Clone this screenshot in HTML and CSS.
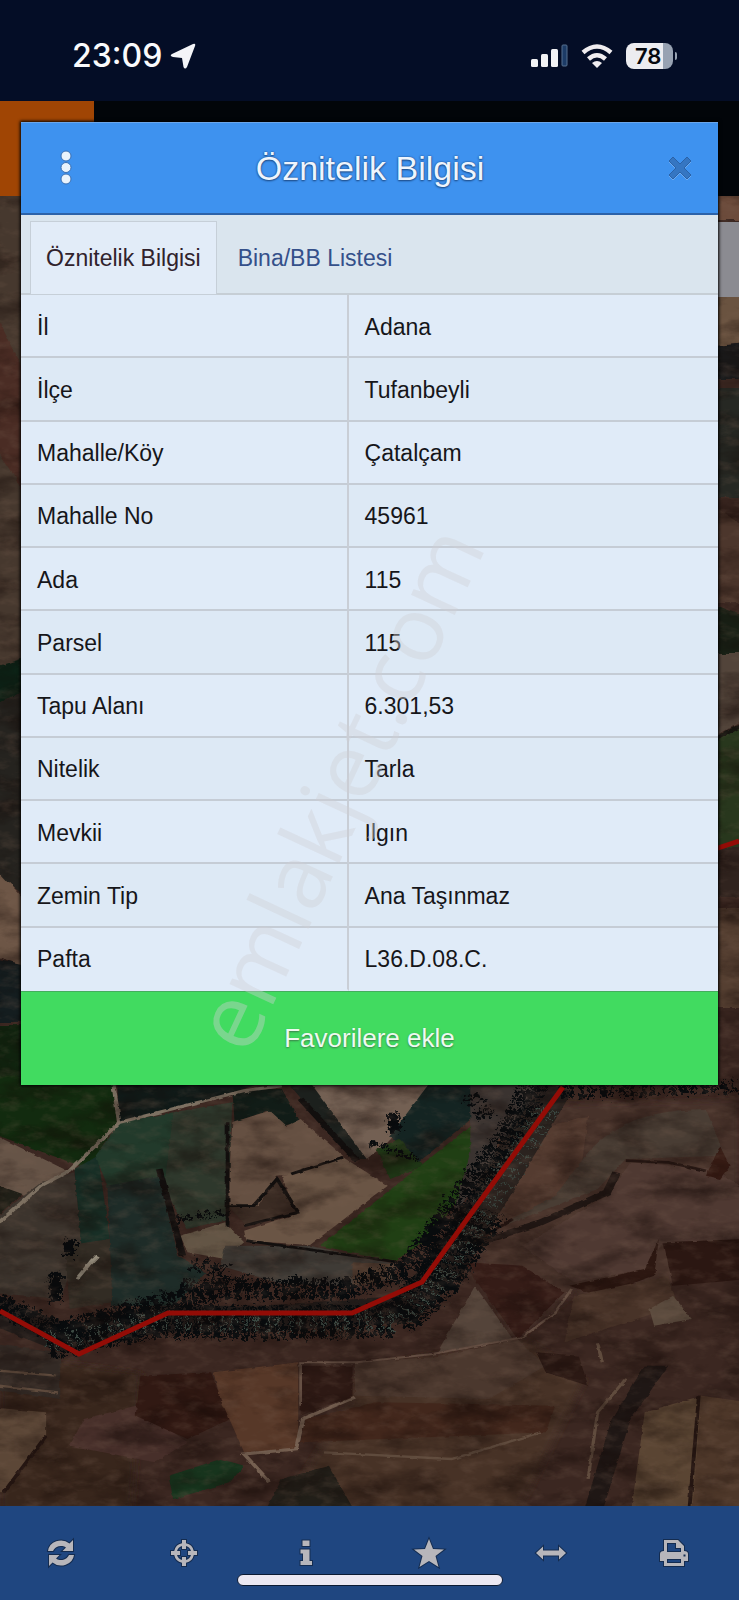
FILE: index.html
```html
<!DOCTYPE html>
<html lang="tr">
<head>
    <meta charset="UTF-8">
    <meta name="viewport" content="width=device-width, initial-scale=1.0">
    <title>Öznitelik Bilgisi</title>
    <link rel="stylesheet" href="styles.css">
</head>
<body>
    <div class="screen">
        <div class="status-bar">
            <div class="status-left">
                <span class="time">23:09</span>
                <svg width="26" height="26" viewBox="0 0 26 26"><path d="M23 1Q26 0 25 3L17 24Q15 27 13.500 24L12 15L3 14Q-1 13 2 11Z" fill="#f4f4f8"/></svg>
            </div>
            <div class="status-right">
                <svg width="37" height="24" viewBox="0 0 37 24">
                    <rect x="0" y="15" width="7" height="8" rx="1.500" fill="#f2f2f4"/>
                    <rect x="10" y="10" width="7" height="13" rx="1.500" fill="#f2f2f4"/>
                    <rect x="20" y="5" width="7" height="18" rx="1.500" fill="#f2f2f4"/>
                    <rect x="31" y="1" width="5" height="21" rx="1" fill="#1c3b66" stroke="#56718f"/>
                </svg>
                <svg width="32" height="24" viewBox="0 0 32 24" fill="none" stroke="#f0edf0" stroke-width="4.500">
                    <path d="M2 8.500Q16-3.500 30 8.500M7.500 15Q16 7.500 24.500 15"/>
                    <path d="M16 24L11 19Q16 15 21 19Z" fill="#f0edf0" stroke="none"/>
                </svg>
                <div class="battery"><span class="battery-level">78</span></div>
            </div>
        </div>

        <div class="top-bar"><div class="menu-tile"></div></div>

        <div class="map">
            <svg class="map-image" viewBox="0 196 739 1310" preserveAspectRatio="xMidYMin slice">
                <defs>
                    <filter id="rough" x="-5%" y="-5%" width="110%" height="110%">
                        <feTurbulence type="fractalNoise" baseFrequency="0.060" numOctaves="3" seed="4" result="n"/>
                        <feDisplacementMap in="SourceGraphic" in2="n" scale="10" xChannelSelector="R" yChannelSelector="G" color-interpolation-filters="sRGB"/>
                    </filter>
                    <filter id="trees" x="-5%" y="-20%" width="110%" height="140%">
                        <feTurbulence type="fractalNoise" baseFrequency="0.110 0.080" numOctaves="4" seed="9" result="n"/>
                        <feDisplacementMap in="SourceGraphic" in2="n" scale="52" xChannelSelector="R" yChannelSelector="G" color-interpolation-filters="sRGB"/>
                    </filter>
                    <filter id="soft"><feGaussianBlur stdDeviation="8"/></filter>
                    <filter id="grainDark" x="0" y="0" width="100%" height="100%" color-interpolation-filters="sRGB">
                        <feTurbulence type="fractalNoise" baseFrequency="0.018 0.040" numOctaves="5" seed="12"/>
                        <feColorMatrix values="0 0 0 0 0.070  0 0 0 0 0.030  0 0 0 0 0.020  2.200 0 0 0 -0.950"/>
                    </filter>
                    <filter id="grainLight" x="0" y="0" width="100%" height="100%" color-interpolation-filters="sRGB">
                        <feTurbulence type="fractalNoise" baseFrequency="0.050 0.100" numOctaves="4" seed="31"/>
                        <feColorMatrix values="0 0 0 0 0.480  0 0 0 0 0.380  0 0 0 0 0.320  0 2 0 0 -0.950"/>
                    </filter>
                </defs>
                <rect y="196" width="739" height="1310" fill="#3b2721"/>

                <!-- left edge -->
                <g filter="url(#rough)">
                    <path d="M-10 190H30V670H-10Z" fill="#46382e"/>
                    <path d="M-10 300L30 380V500L-10 440Z" fill="#4a2c24"/>
                    <path d="M-10 672L30 660V694L-10 708Z" fill="#0c2216"/>
                    <path d="M-10 708L30 694V900L-10 870Z" fill="#25231f"/>
                    <path d="M-10 862L30 905V970L-10 956Z" fill="#6d5646"/>
                    <path d="M-10 960L30 968V1025H-10Z" fill="#141d1f"/>
                    <path d="M-10 1028H30V1100H-10Z" fill="#10240f"/>
                </g>

                <!-- right edge -->
                <g filter="url(#rough)">
                    <path d="M700 190H750V222H700Z" fill="#6b4a3a"/>
                    <path d="M700 290H750V345L700 350Z" fill="#6a5340"/>
                    <path d="M700 350L750 345V382H700Z" fill="#1b1c1d"/>
                    <path d="M700 390H750V500H700Z" fill="#262823"/>
                    <path d="M700 500L750 530V605H700Z" fill="#4c362c"/>
                    <path d="M700 600L750 620V655H700Z" fill="#182015"/>
                    <path d="M700 655H750V720L700 750Z" fill="#52443a"/>
                    <path d="M700 755L750 725V850H700Z" fill="#28371d"/>
                    <path d="M700 850H750V900H700Z" fill="#30231e"/>
                    <path d="M700 910H750V1010H700Z" fill="#553f31"/>
                    <path d="M700 752L750 724" stroke="#15140f" stroke-width="4"/>
                </g>

                <!-- fields and hills below the dialog -->
                <g transform="translate(0 1080) scale(0.4713 0.3333)">
                    <g filter="url(#soft)">
                        <path d="M1000 80L1568 60V500L1400 620L1220 640L1090 780L1000 500Z" fill="#463029"/>
                        <path d="M0 820L300 880L280 1290H0Z" fill="#38251e"/>
                        <path d="M760 860L1120 780L1240 900L1100 1290H600L740 960Z" fill="#463327"/>
                    </g>
                    <g filter="url(#rough)">
                        <path d="M-20-10H245L250 130L190 270L-20 160Z" fill="#122b0f"/>
                        <path d="M250-10H600L500 40L255 130Z" fill="#101a18"/>
                        <path d="M-20 160L145 275L70 360L-20 310Z" fill="#665447"/>
                        <path d="M-20 310L50 345L-20 430Z" fill="#201f17"/>
                        <path d="M-20 430L90 310L160 280L175 490L130 660L-20 640Z" fill="#3c342d"/>
                        <path d="M160 270L210 230L235 480L175 500Z" fill="#182f26"/>
                        <path d="M205 230L255 130L370 100L385 260L340 320L230 320Z" fill="#223a2b"/>
                        <path d="M370 100L495 70L485 420L400 450L350 330Z" fill="#2e382c"/>
                        <path d="M230 320L340 290L380 530L440 580L370 680L240 680Z" fill="#1e2c28"/>
                        <path d="M140 500L235 480L240 670L150 690Z" fill="#322c24"/>
                        <path d="M495 30L600 30L640 130L600 140L570 95L500 130Z" fill="#111c17"/>
                        <path d="M495 130L575 95L610 140L640 120L730 230L620 285L590 290L550 380L485 380Z" fill="#655042"/>
                        <path d="M600 290L730 235L825 320L660 498L525 485L520 455L630 405Z" fill="#6a5545"/>
                        <path d="M485 380L550 380L595 295L635 400L525 440Z" fill="#3b2c24"/>
                        <path d="M630-10H930L915 50L825 190L780 240Z" fill="#736053"/>
                        <path d="M600-10H650L780 240L750 240Z" fill="#1c201d"/>
                        <path d="M925-10H1010V110L890 250L830 170Z" fill="#142422"/>
                        <path d="M800 210L850 180L900 260L830 300Z" fill="#1e3515"/>
                        <path d="M1010 130L1080 150L1000 320L900 490L840 545L680 500L850 310L930 220Z" fill="#203f14"/>
                        <path d="M385 470L480 430L520 490L480 540L400 520Z" fill="#635545"/>
                        <path d="M480 500L660 500L840 555V600L740 620L600 615L470 560Z" fill="#3f3b36"/>
                        <path d="M750 550L840 555L830 600L750 620Z" fill="#503c30"/>
                        <path d="M1000-10H1160L1050 240L960 420L1000 220Z" fill="#3a3330"/>
                        <path d="M1060 180L1250 110L1230 330L1010 480Z" fill="#543b30"/>
                        <path d="M1250 220Q1330 90 1500 90L1540 230L1330 240L1270 330L1090 430L1020 470L1180 350Z" fill="#493d34"/>
                        <path d="M1340 250L1520 270L1590 340V480L1410 490L1370 570L1220 610L1110 500L1290 350Z" fill="#4f3932"/>
                        <path d="M1410 490L1590 480V600L1430 620Z" fill="#2b1712"/>
                        <path d="M1210 620L1370 570L1400 480L1390 590L1270 650Z" fill="#2c1711"/>
                        <path d="M1500 290L1530 200L1550 260L1530 300Z" fill="#351a13"/>
                        <path d="M985 550L1110 560L1200 640L1100 780Z" fill="#351c17"/>
                        <path d="M1010 620L1090 780L930 820Z" fill="#54443a"/>
                        <path d="M1220 650L1420 590L1440 680L1200 790Z" fill="#483328"/>
                        <path d="M1380 690L1430 650L1470 720L1390 740Z" fill="#5a4a3d"/>
                        <path d="M-20 790L130 820V960L-20 930Z" fill="#332a25"/>
                        <path d="M-20 985L100 1000L100 1070L10 1240H-20Z" fill="#5c4737"/>
                        <path d="M180 1020L290 980L400 1090L330 1150L150 1100Z" fill="#472f2a"/>
                        <path d="M300 890L450 880L490 1020L400 1080L290 1010Z" fill="#311913"/>
                        <path d="M455 880L635 850V1110L520 1120L470 960Z" fill="#573828"/>
                        <path d="M640 860L750 860V950L640 1010Z" fill="#2d1914"/>
                        <path d="M755 850L920 835L1100 780L1160 860L1040 960L755 950Z" fill="#4b382e"/>
                        <path d="M650 1020L800 970L1180 980L1160 1060L640 1090Z" fill="#42271c"/>
                        <path d="M1140 820L1230 830L1250 920L1160 880Z" fill="#2b1914"/>
                        <path d="M1370 860L1420 860L1340 1020L1280 1300H1240L1300 1020Z" fill="#1f1715"/>
                        <path d="M1370 1000L1490 950L1480 1310H1340Z" fill="#5a4533"/>
                        <path d="M1490 950L1590 970V1310H1470Z" fill="#4d3729"/>
                        <path d="M360 1190L470 1140L520 1160L490 1210L370 1260Z" fill="#17341d"/>
                        <path d="M600 1200L700 1160L760 1310H560Z" fill="#221f19"/>
                    </g>
                    <g filter="url(#rough)" fill="none" stroke="#7d7162" stroke-width="9">
                        <path d="M240-10L255 130L520 35L600 20M255 130L150 275L90 320L0 430"/>
                        <path d="M755 955L645 1020L630 1110L520 1125L575 1210" stroke="#756051"/>
                        <path d="M640 980V850L760 850L920 825L1110 775L1180 700L1215 630" stroke="#665044" stroke-width="6"/>
                        <path d="M0 875L120 890M0 920L125 940M690 1120L960 1140L1150 1060M1270 790L1280 850M1250 1200L1270 1000L1330 900" stroke="#5f4b3d" stroke-width="7"/>
                        <path d="M200 540L165 600M210 530L190 560" stroke="#9b9382"/>
                    </g>
                    <g filter="url(#rough)" fill="none" stroke="#120f0e" stroke-width="8">
                        <path d="M485 380H540L590 300L635 400L520 440M620 285L730 235M525 485L850 550M485 130V440"/>
                        <path d="M1330 245L1420 250L1500 275M1090 420L1020 480M10 1240L100 1070M1485 950L1465 1290" stroke="#251612"/>
                        <path d="M1000 500L1150 430L1290 340L1310 280" stroke="#211714" stroke-width="18"/>
                        <path d="M340 270L390 530M640 60L760 245" stroke-width="14"/>
                    </g>
                    <g filter="url(#rough)" fill="none" stroke="#111414" stroke-opacity="0.600" stroke-linejoin="round">
                        <path d="M-20 690L140 780L340 720L560 720L860 690L950 560L1050 330L1180 20" stroke-width="80"/>
                    </g>
                    <g filter="url(#trees)" fill="none" stroke="#080b0d">
                        <path d="M0 680L140 770L330 690L480 640H740L880 580L960 430L1100 160L1160-20" stroke-width="60" stroke-dasharray="12 7 17 9 9 6"/>
                        <path d="M110 800L340 735L560 740L850 735L940 620L1040 400" stroke-width="100" stroke-dasharray="13 7 8 9 16 8"/>
                        <path d="M400 630L540 620M420 560L500 590M1010 60L1050 130M1200 50L1590 30" stroke-width="40" stroke-dasharray="12 9 8 14"/>
                        <path d="M915 500L950 420M845 110L850 170M130 590V680M160 490V540M640 600V630" stroke-width="24"/>
                        <path d="M800 200L900 250M390 430L480 410" stroke-width="18" stroke-dasharray="12 9"/>
                        <path d="M110 800L340 735L560 740L850 735L940 620L1040 400L1180 80" stroke="#3c4a43" stroke-width="56" stroke-dasharray="3 16 4 25"/>
                    </g>
                </g>

                <rect y="196" width="739" height="1310" filter="url(#grainDark)" opacity="0.550"/>
                <rect y="196" width="739" height="1310" filter="url(#grainLight)" opacity="0.300"/>

                <!-- parcel boundary -->
                <g fill="none" stroke="#930c06" stroke-width="5">
                    <path d="M0 1311L79 1354L168 1313H352L422 1282L470 1215L563 1087"/>
                    <path d="M715 849L739 841"/>
                </g>
                <path d="M718 222H739V297H718Z" fill="#8b8b91"/>
            </svg>
        </div>

        <nav class="toolbar">
            <button type="button" aria-label="Yenile">
                <svg width="28" height="28" viewBox="0 0 28 28"><path d="M1 12A13 12 0 0 1 22.500 4.500L26 1V12H15.500L19 8.500A8.500 8 0 0 0 6 12Z M27 16A13 12 0 0 1 5.500 23.500L2 27V16H12.500L9 19.500A8.500 8 0 0 0 22 16Z"/></svg>
            </button>
            <button type="button" aria-label="Konum">
                <svg width="28" height="28" viewBox="0 0 28 28"><path fill-rule="evenodd" d="M12 1H16V4.200A10 10 0 0 1 23.800 12H27V16H23.800A10 10 0 0 1 16 23.800V27H12V23.800A10 10 0 0 1 4.200 16H1V12H4.200A10 10 0 0 1 12 4.200ZM12 7A7.500 7.500 0 0 0 7 12H10V16H7A7.500 7.500 0 0 0 12 21V18H16V21A7.500 7.500 0 0 0 21 16H18V12H21A7.500 7.500 0 0 0 16 7V10H12Z"/></svg>
            </button>
            <button type="button" aria-label="Bilgi">
                <svg width="28" height="28" viewBox="0 0 28 28"><path d="M10.500 1.500H17.500V7H10.500ZM8.500 10.500H17.500V22H20V26H8.500V22H11V14.500H8.500Z"/></svg>
            </button>
            <button type="button" aria-label="Favoriler">
                <svg width="32" height="30" viewBox="0 0 32 30"><path d="M16 1L20 11L31 11.500L22.500 18L25.500 29L16 23L6.500 29L9.500 18L1 11.500L12 11Z"/></svg>
            </button>
            <button type="button" aria-label="Ölçüm">
                <svg width="32" height="28" viewBox="0 0 32 28"><path d="M1 14L8 7.500V11.500H24V7.500L31 14L24 20.500V16.500H8V20.500Z"/></svg>
            </button>
            <button type="button" aria-label="Yazdır">
                <svg width="30" height="28" viewBox="0 0 30 28"><path fill-rule="evenodd" d="M5 1H19L25 7V12Q29 12 29 15V22H25V27H5V22H1V15Q1 12 5 12ZM8 4V13H22V9H17V4ZM8 20V24H22V20ZM24.500 15.500V17.500H26.500V15.500Z"/></svg>
            </button>
            <div class="home-indicator"></div>
        </nav>

        <div class="dialog" role="dialog" aria-labelledby="dialog-title">
            <div class="dialog-header">
                <button type="button" class="more-btn" aria-label="Menü">
                    <svg width="12" height="36" viewBox="0 0 12 36"><circle cx="6" cy="6" r="5"/><circle cx="6" cy="17.500" r="5"/><circle cx="6" cy="29" r="5"/></svg>
                </button>
                <h1 id="dialog-title">Öznitelik Bilgisi</h1>
                <button type="button" class="close-btn" aria-label="Kapat">
                    <svg width="24" height="24" viewBox="0 0 24 24"><path d="M1 5L5 1L12 8L19 1L23 5L16 12L23 19L19 23L12 16L5 23L1 19L8 12Z"/></svg>
                </button>
            </div>
            <div class="tabs">
                <a href="#oznitelik" class="tab active">Öznitelik Bilgisi</a>
                <a href="#bina" class="tab">Bina/BB Listesi</a>
            </div>
            <table class="attributes" id="oznitelik">
                <tr><th scope="row">İl</th><td>Adana</td></tr>
                <tr><th scope="row">İlçe</th><td>Tufanbeyli</td></tr>
                <tr><th scope="row">Mahalle/Köy</th><td>Çatalçam</td></tr>
                <tr><th scope="row">Mahalle No</th><td>45961</td></tr>
                <tr><th scope="row">Ada</th><td>115</td></tr>
                <tr><th scope="row">Parsel</th><td>115</td></tr>
                <tr><th scope="row">Tapu Alanı</th><td>6.301,53</td></tr>
                <tr><th scope="row">Nitelik</th><td>Tarla</td></tr>
                <tr><th scope="row">Mevkii</th><td>Ilgın</td></tr>
                <tr><th scope="row">Zemin Tip</th><td>Ana Taşınmaz</td></tr>
                <tr><th scope="row">Pafta</th><td>L36.D.08.C.</td></tr>
            </table>
            <button type="button" class="favorite-btn">Favorilere ekle</button>
        </div>

        <div class="watermark">emlakjet.com</div>
    </div>
</body>
</html>
```

FILE: styles.css
```css
* {
    margin: 0;
    padding: 0;
    box-sizing: border-box;
}

body {
    font-family: "Liberation Sans", Arial, sans-serif;
    background: #000;
}

button {
    border: none;
    background: none;
    font-family: inherit;
    cursor: pointer;
}

svg {
    display: block;
}

.screen {
    position: relative;
    display: flex;
    flex-direction: column;
    min-height: 100vh;
    overflow: hidden;
}

/* Status bar */
.status-bar {
    display: flex;
    justify-content: space-between;
    align-items: center;
    height: 101px;
    padding: 10px 66px 0 72px;
    background: #040d26;
    color: #fafafc;
}

.status-left,
.status-right {
    display: flex;
    align-items: center;
}

.status-left {
    gap: 8px;
}

.status-right {
    gap: 13px;
}

.time {
    font-family: Inter, sans-serif;
    font-size: 32px;
    font-weight: 500;
}

.battery {
    position: relative;
    width: 47px;
    height: 26px;
    border-radius: 8px;
    background: linear-gradient(90deg, #ececf0 37px, #98a2b2 37px);
}

.battery::after {
    content: "";
    position: absolute;
    top: 9px;
    right: -4px;
    width: 2px;
    height: 8px;
    border-radius: 0 2px 2px 0;
    background: #98a2b2;
}

.battery-level {
    display: block;
    padding-left: 9px;
    font-family: Inter, sans-serif;
    font-size: 22px;
    font-weight: 600;
    line-height: 26px;
    color: #06080f;
}

/* Page behind the dialog */
.top-bar {
    height: 95px;
    background: #020509;
}

.menu-tile {
    width: 94px;
    height: 95px;
    background: #a04504;
}

.map {
    position: relative;
    flex: 1;
    min-height: 1310px;
    background: #33231e;
}

.map-image {
    position: absolute;
    width: 100%;
    height: 100%;
}

.toolbar {
    position: relative;
    display: flex;
    height: 94px;
    padding-right: 4px;
    background: #1f4680;
}

.toolbar button {
    flex: 1;
    display: flex;
    justify-content: center;
    align-items: center;
}

.toolbar svg {
    fill: #b7b6bb;
    stroke: #142c50;
    stroke-width: 2px;
    paint-order: stroke;
    overflow: visible;
}

.home-indicator {
    position: absolute;
    bottom: 14px;
    left: 50%;
    width: 266px;
    height: 12px;
    border: 1px solid #0b1a33;
    border-radius: 6px;
    background: #ebe8f2;
    transform: translateX(-50%);
}

/* Dialog */
.dialog {
    position: absolute;
    top: 122px;
    left: 21px;
    right: 21px;
    background: #e0ebf8;
    box-shadow: 0 0 3px 1px #000;
}

.dialog-header {
    display: flex;
    justify-content: space-between;
    align-items: center;
    height: 93px;
    padding: 0 26px 0 39px;
    border-top: 1px solid #6ba6ea;
    border-bottom: 2px solid #2c62a8;
    background: #3e92ef;
}

.dialog-header h1 {
    font-size: 34px;
    font-weight: normal;
    color: #eef5fd;
    text-shadow: 0 0 2px #1d4a85, 0 1px 2px #1d4a85;
}

.more-btn svg {
    fill: #e9f3fc;
    stroke: #3a70b4;
    stroke-width: 1px;
}

.close-btn svg {
    fill: #3576c2;
    stroke: #2a62a8;
    filter: drop-shadow(0 1px 0 #6cabf0);
}

.tabs {
    display: flex;
    height: 80px;
    padding: 6px 9px 0;
    border-bottom: 2px solid #c6ced5;
    background: #dae5ee;
}

.tab {
    padding: 0 21px;
    font-size: 23px;
    line-height: 74px;
    color: #34508a;
    text-decoration: none;
}

.tab.active {
    height: 74px;
    padding: 0 15px;
    border: 1px solid #c6cfd8;
    background: #e2ecf8;
    line-height: 72px;
    color: #30222c;
}

.attributes {
    width: 100%;
    height: 696px;
    border-collapse: separate;
    border-spacing: 0;
    table-layout: fixed;
    font-size: 23px;
    color: #16161a;
}

.attributes th,
.attributes td {
    padding: 3px 16px 0;
    border-bottom: 2px solid #c5ccd5;
    font-weight: normal;
    text-align: left;
}

.attributes th {
    width: 47%;
    border-right: 2px solid #c9ced6;
}

.attributes tr:nth-child(even) {
    background: #dde9f5;
}

.attributes tr:last-child th,
.attributes tr:last-child td {
    border-bottom-color: transparent;
}

.favorite-btn {
    display: block;
    width: 100%;
    height: 94px;
    border-top: 1px solid #43ae5c;
    background: #41db60;
    font-size: 26px;
    color: #eefaf0;
    text-shadow: 0 1px 2px #3c7a4a;
}

.watermark {
    position: absolute;
    top: 787px;
    left: 336px;
    font-family: "Open Sans", sans-serif;
    font-size: 90px;
    line-height: 1;
    color: rgba(208, 208, 212, 0.4);
    transform: translate(-50%, -50%) rotate(-65deg);
    pointer-events: none;
}
```
